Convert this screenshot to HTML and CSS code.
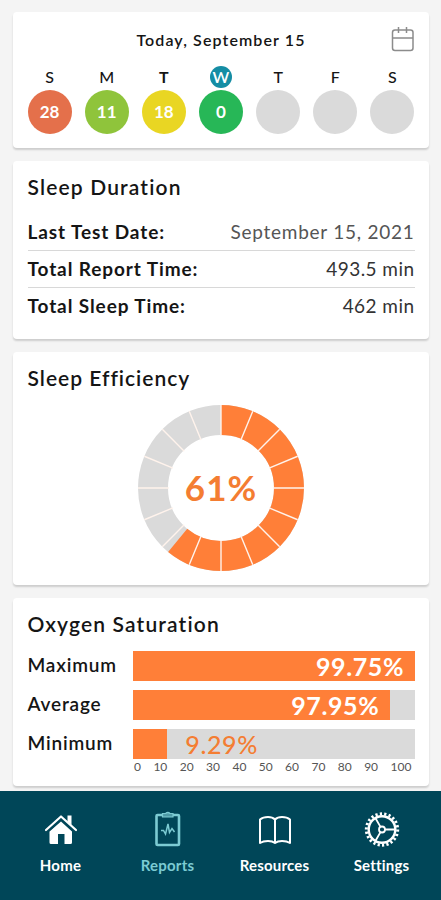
FILE: index.html
```
<!DOCTYPE html>
<html lang="en">
<head>
    <meta charset="UTF-8">
    <title>Sleep Report</title>
    <link rel="stylesheet" href="styles.css">
</head>
<body>

<main class="cards">
    <section class="card week">
        <div class="week-header">
            <span class="today">Today, September 15</span>
            <svg class="calendar" width="24" height="26" viewBox="0 0 24 26" fill="none" stroke="#8c8c8c" stroke-width="1.5">
                <rect x="1.5" y="4" width="20.5" height="20.5" rx="2.5"/>
                <path d="M1.5 12H22M7.5 1V7M15.5 1V7"/>
            </svg>
        </div>
        <div class="days">
            <div class="day"><span class="letter">S</span><span class="score red">28</span></div>
            <div class="day"><span class="letter">M</span><span class="score lime">11</span></div>
            <div class="day"><span class="letter bold">T</span><span class="score yellow">18</span></div>
            <div class="day"><span class="letter current">W</span><span class="score green">0</span></div>
            <div class="day"><span class="letter">T</span><span class="score"></span></div>
            <div class="day"><span class="letter">F</span><span class="score"></span></div>
            <div class="day"><span class="letter">S</span><span class="score"></span></div>
        </div>
    </section>

    <section class="card duration">
        <h2>Sleep Duration</h2>
        <div class="row"><span class="label">Last Test Date:</span><span class="value date">September 15, 2021</span></div>
        <div class="row"><span class="label">Total Report Time:</span><span class="value">493.5 min</span></div>
        <div class="row"><span class="label">Total Sleep Time:</span><span class="value">462 min</span></div>
    </section>

    <section class="card efficiency">
        <h2>Sleep Efficiency</h2>
        <div class="donut">
            <svg width="166" height="166" viewBox="-83 -83 166 166" fill="none">
                <circle r="68" stroke="#dadada" stroke-width="30"/>
                <circle r="68" stroke="#ff7f38" stroke-width="30" pathLength="100" stroke-dasharray="61 39" transform="rotate(-90)"/>
                <!-- 16 segments -->
                <g stroke="#fff3ec" stroke-width="1.4">
                    <path id="cut" d="M0 -83V-52M0 52V83"/>
                    <use href="#cut" transform="rotate(22.5)"/>
                    <use href="#cut" transform="rotate(45)"/>
                    <use href="#cut" transform="rotate(67.5)"/>
                    <use href="#cut" transform="rotate(90)"/>
                    <use href="#cut" transform="rotate(112.5)"/>
                    <use href="#cut" transform="rotate(135)"/>
                    <use href="#cut" transform="rotate(157.5)"/>
                </g>
            </svg>
            <span class="percent">61%</span>
        </div>
    </section>

    <section class="card oxygen">
        <h2>Oxygen Saturation</h2>
        <div class="bar-row">
            <span class="bar-label">Maximum</span>
            <div class="bar"><div class="fill" style="width: 100%">99.75%</div></div>
        </div>
        <div class="bar-row">
            <span class="bar-label">Average</span>
            <div class="bar"><div class="fill" style="width: 91.2%">97.95%</div></div>
        </div>
        <div class="bar-row">
            <span class="bar-label">Minimum</span>
            <div class="bar"><div class="fill" style="width: 12.2%"></div><span class="outside">9.29%</span></div>
        </div>
        <div class="axis">
            <span>0</span><span>10</span><span>20</span><span>30</span><span>40</span><span>50</span><span>60</span><span>70</span><span>80</span><span>90</span><span>100</span>
        </div>
    </section>
</main>

<nav class="tabs">
    <a class="tab">
        <svg width="36" height="36" viewBox="0 0 36 36">
            <path d="M6.5 20.5L18 10.5L29 20.5V31.5Q29 33 27.5 33H21.5V23H15V33H8Q6.5 33 6.5 31.5Z" fill="#fff"/>
            <path d="M24.5 4.5H28.5V14L24.5 10.5Z" fill="#fff"/>
            <path d="M3 19L18 5.5L33 19" fill="none" stroke="#fff" stroke-width="2.2" stroke-linecap="round" stroke-linejoin="round"/>
            <path d="M5.5 20.5L18 9L30.5 20.5" fill="none" stroke="#004658"/>
        </svg>
        <span>Home</span>
    </a>
    <a class="tab active">
        <svg width="36" height="36" viewBox="0 0 36 36" fill="none" stroke="#7ccbd3">
            <rect x="6.5" y="4" width="22.5" height="30" rx="1" stroke-width="2.6"/>
            <path d="M12.500 2.500H15.500Q18 .5 20 2.500H23V6H12.500Z" fill="#4e9aa6" stroke-width="1.2"/>
            <path d="M11 19.500H13.500L15.500 23L18 13L19.500 21.500L22 17.500L24.500 21" stroke-width="1.5"/>
        </svg>
        <span>Reports</span>
    </a>
    <a class="tab">
        <svg width="36" height="36" viewBox="0 0 36 36" fill="none" stroke="#fff" stroke-width="2" stroke-linejoin="round">
            <path d="M18 8.500Q15.500 6 11 6Q6 6 3 8.500V32Q6 30 11 30Q15.500 30 18 32Q20.500 30 25 30Q30 30 33 32V8.500Q30 6 25 6Q20.500 6 18 8.500V32"/>
        </svg>
        <span>Resources</span>
    </a>
    <a class="tab">
        <svg width="36" height="36" viewBox="-18 -18.5 36 36" fill="none" stroke="#fff">
            <circle r="15.7" stroke-width="3" pathLength="44" stroke-dasharray="1 1"/>
            <circle r="13.3" stroke-width="2.4"/>
            <circle r="3" stroke-width="1.8"/>
            <path d="M3 0H13M-1.5 -2.6L-6.5 -11.3M-1.5 2.6L-6.5 11.3" stroke-width="1.8"/>
        </svg>
        <span>Settings</span>
    </a>
</nav>

</body>
</html>
```
FILE: styles.css
```
* {
    box-sizing: border-box;
}
body {
    margin: 0;
    height: 900px;
    overflow: hidden;
    display: flex;
    flex-direction: column;
    font-family: Lato, "Open Sans", sans-serif;
    color: #151515;
    background: #f4f4f4;
}
.cards {
    height: 791px;
    padding: 12px 12px 0 13px;
    display: flex;
    flex-direction: column;
    gap: 13px;
}
.card {
    flex-shrink: 0;
    padding: 0 14.5px;
    border-radius: 4px;
    background: #fff;
    box-shadow: 0 2px 2px rgba(0,0,0,0.16);
}
.week {
    height: 136px;
}
.duration {
    height: 178px;
}
.efficiency {
    height: 233px;
}
.oxygen {
    height: 188px;
}
h2 {
    margin: 0;
    padding-top: 13px;
    font-size: 21px;
    line-height: 26px;
    font-weight: 600;
    letter-spacing: 1.15px;
}
.efficiency h2 {
    letter-spacing: 1px;
}

/* week strip */
.week-header {
    display: grid;
    grid-template-columns: 24px 1fr 24px;
    align-items: center;
    height: 54px;
}
.today {
    grid-column: 2;
    text-align: center;
    font-size: 16px;
    font-weight: 600;
    letter-spacing: 1.1px;
}
.days {
    display: flex;
    justify-content: space-between;
}
.day {
    width: 44px;
    display: flex;
    flex-direction: column;
    align-items: center;
}
.letter {
    width: 22px;
    height: 22px;
    margin-bottom: 1.5px;
    border-radius: 50%;
    text-align: center;
    font-size: 16px;
    line-height: 22px;
    font-weight: 500;
}
.bold {
    font-weight: 700;
}
.current {
    background: #158da4;
    color: #fff;
    font-weight: 600;
}
.score {
    width: 44px;
    height: 44px;
    border-radius: 50%;
    background: #dadada;
    color: #fff;
    text-align: center;
    font-size: 17px;
    line-height: 44px;
    font-weight: 700;
}
.red {
    background: #e4704b;
}
.lime {
    background: #8fc43b;
}
.yellow {
    background: #e9d623;
}
.green {
    background: #27b757;
}

/* sleep duration */
.row {
    display: flex;
    justify-content: space-between;
    height: 37px;
    line-height: 36px;
    font-size: 19px;
    border-bottom: 1px solid #d8d8d8;
}
h2 + .row {
    margin-top: 14px;
}
.row:last-child {
    border-bottom: none;
}
.label {
    font-weight: 700;
    letter-spacing: 0.9px;
}
.value {
    color: #333;
    letter-spacing: 0.45px;
}
.date {
    color: #555;
    letter-spacing: 0.75px;
}

/* sleep efficiency */
.donut {
    display: grid;
    justify-content: center;
    align-items: center;
    margin-top: 14px;
}
.donut svg,
.percent {
    grid-area: 1 / 1;
}
.percent {
    text-align: center;
    font-size: 35px;
    line-height: 40px;
    padding-bottom: 2px;
    font-weight: 700;
    letter-spacing: 1px;
    color: #f47d32;
}

/* oxygen saturation */
.bar-row {
    display: flex;
    height: 29.5px;
    margin-bottom: 9.5px;
}
h2 + .bar-row {
    margin-top: 14px;
}
.bar-label {
    width: 105.5px;
    font-size: 19px;
    line-height: 28px;
    font-weight: 600;
    letter-spacing: 0.8px;
}
.bar {
    flex: 1;
    display: flex;
    height: 100%;
    line-height: 30px;
    font-size: 25px;
    letter-spacing: 0.6px;
    background: #dadada;
}
.fill {
    padding-right: 10.5px;
    text-align: right;
    font-weight: 700;
    color: #fff;
    background: #ff7f38;
}
.outside {
    margin-left: 18px;
    color: #f47d32;
    font-weight: 500;
}
.axis {
    display: flex;
    justify-content: space-between;
    margin: -9px 3px 0 106.5px;
    font-size: 12px;
    line-height: 16px;
    color: #555;
}

/* bottom navigation */
.tabs {
    height: 109px;
    padding: 20px 6px 0 7px;
    display: grid;
    grid-template-columns: repeat(4, 1fr);
    background: #004658;
}
.tab {
    display: flex;
    flex-direction: column;
    align-items: center;
    gap: 8px;
    color: #fff;
    font-size: 15px;
    line-height: 20px;
    font-weight: 700;
    letter-spacing: 0.2px;
}
.active {
    color: #7ccbd3;
}
```
